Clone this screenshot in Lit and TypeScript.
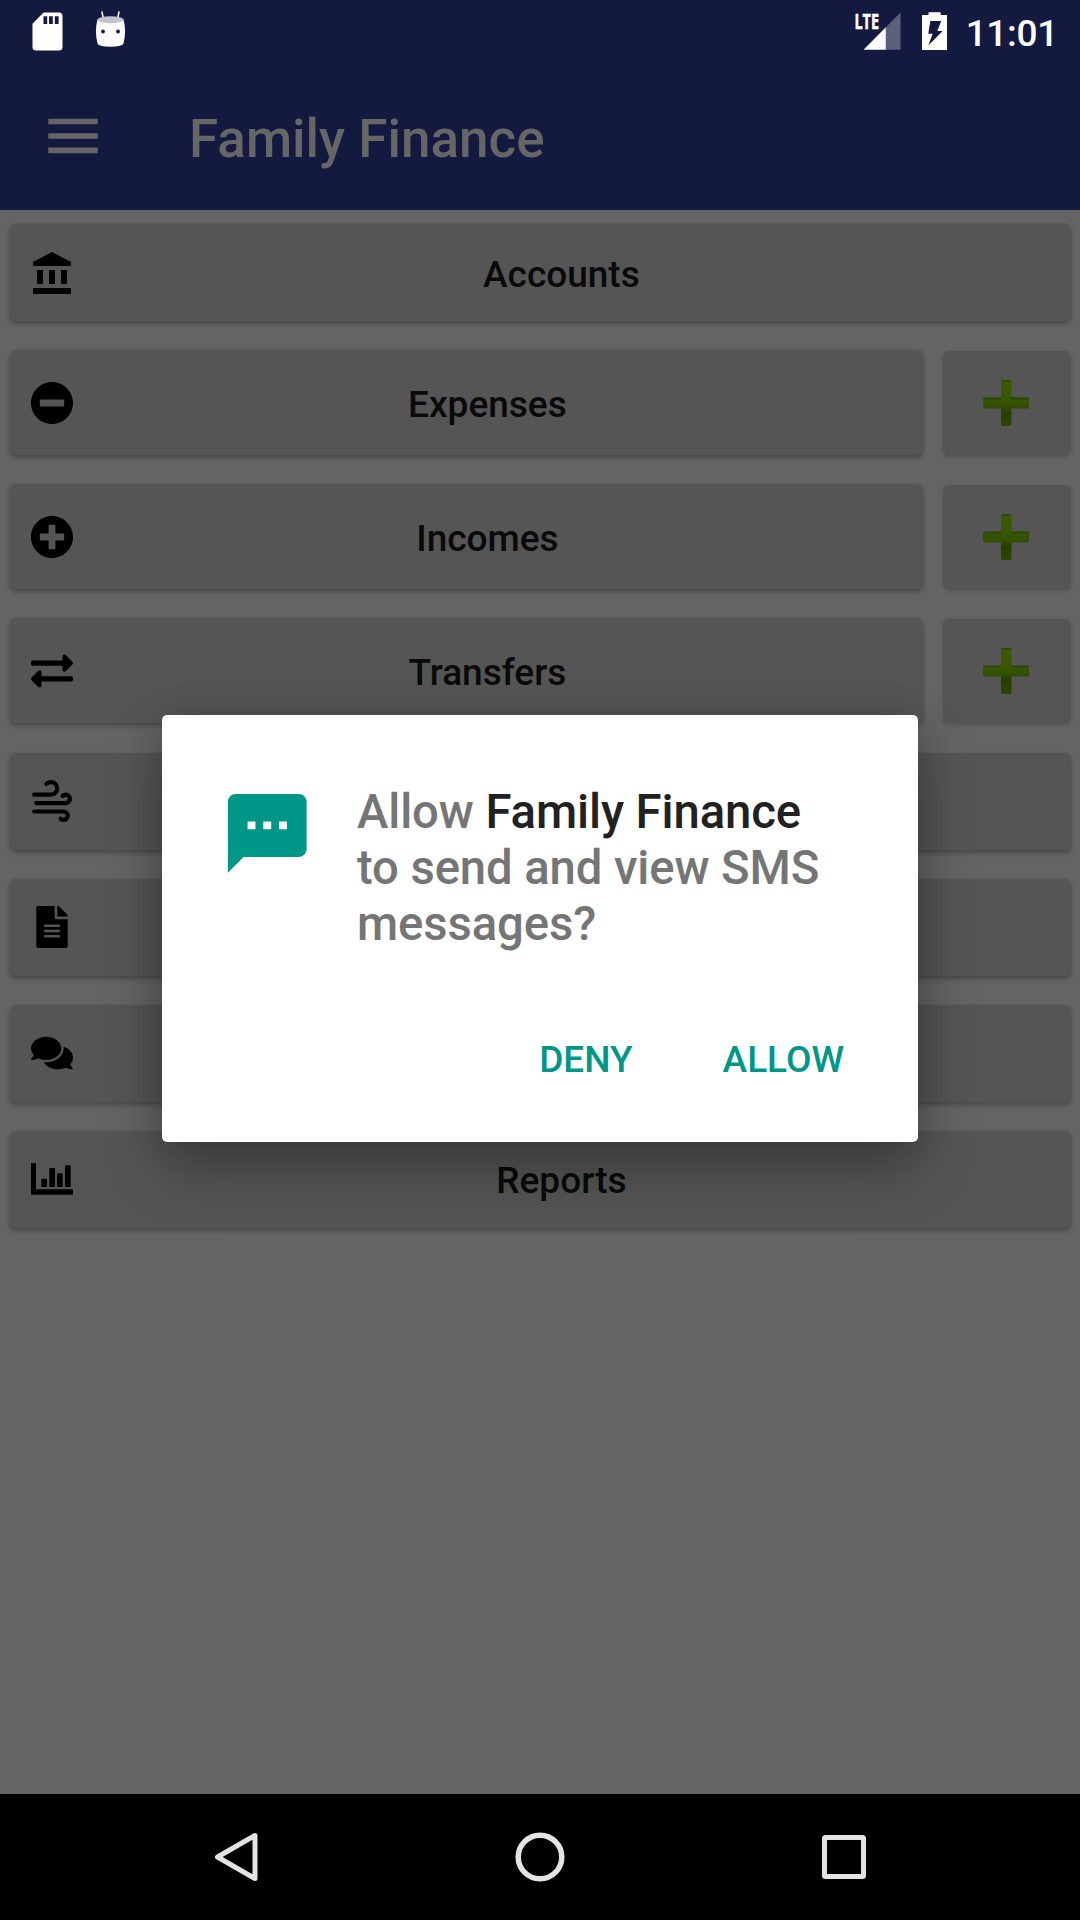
import { LitElement, html, svg, css, nothing } from "lit";
import { customElement, property } from "lit/decorators.js";

const icons: Record<string, unknown> = {
  accounts: svg`<svg class="bank" viewBox="2 1 19 21"><path d="M4 10v7h3v-7H4zm6 0v7h3v-7h-3zM2 22h19v-3H2v3zm14-12v7h3v-7h-3zm-4.5-9L2 6v2h19V6l-9.500-5z"/></svg>`,
  expenses: svg`<svg class="full" viewBox="8 8 496 496"><path d="M256 8C119 8 8 119 8 256s111 248 248 248 248-111 248-248S393 8 256 8zM124 296c-6.600 0-12-5.400-12-12v-56c0-6.600 5.400-12 12-12h264c6.600 0 12 5.400 12 12v56c0 6.600-5.400 12-12 12H124z"/></svg>`,
  incomes: svg`<svg class="full" viewBox="8 8 496 496"><path d="M256 8C119 8 8 119 8 256s111 248 248 248 248-111 248-248S393 8 256 8zm144 276c0 6.600-5.400 12-12 12h-92v92c0 6.600-5.400 12-12 12h-56c-6.600 0-12-5.400-12-12v-92h-92c-6.600 0-12-5.400-12-12v-56c0-6.600 5.400-12 12-12h92v-92c0-6.600 5.400-12 12-12h56c6.600 0 12 5.400 12 12v92h92c6.600 0 12 5.400 12 12v56z"/></svg>`,
  transfers: svg`<svg class="full" viewBox="0 0 512 512"><path d="M0 168v-16c0-13.255 10.745-24 24-24h360V80c0-21.367 25.899-32.042 40.971-16.971l80 80c9.372 9.373 9.372 24.569 0 33.941l-80 80C409.956 271.982 384 261.456 384 240v-48H24c-13.255 0-24-10.745-24-24zm488 152H128v-48c0-21.314-25.862-32.080-40.971-16.971l-80 80c-9.372 9.373-9.372 24.569 0 33.941l80 80C102.057 463.997 128 453.437 128 432v-48h360c13.255 0 24-10.745 24-24v-16c0-13.255-10.745-24-24-24z"/></svg>`,
  wind: svg`<svg class="full" viewBox="2.500 2 20 20"><path d="M4,10A1,1 0 0,1 3,9A1,1 0 0,1 4,8H12A2,2 0 0,0 14,6A2,2 0 0,0 12,4C11.450,4 10.950,4.220 10.590,4.590C10.200,5 9.560,5 9.170,4.590C8.780,4.200 8.780,3.560 9.170,3.170C9.900,2.450 10.900,2 12,2A4,4 0 0,1 16,6A4,4 0 0,1 12,10H4M19,12A1,1 0 0,0 20,11A1,1 0 0,0 19,10C18.720,10 18.470,10.110 18.290,10.290C17.900,10.680 17.270,10.680 16.880,10.290C16.500,9.900 16.500,9.270 16.880,8.880C17.420,8.340 18.170,8 19,8A3,3 0 0,1 22,11A3,3 0 0,1 19,14H5A1,1 0 0,1 4,13A1,1 0 0,1 5,12H19M18,18H4A1,1 0 0,1 3,17A1,1 0 0,1 4,16H18A3,3 0 0,1 21,19A3,3 0 0,1 18,22C17.170,22 16.420,21.660 15.880,21.120C15.500,20.730 15.500,20.100 15.880,19.710C16.270,19.320 16.900,19.320 17.290,19.710C17.470,19.890 17.720,20 18,20A1,1 0 0,0 19,19A1,1 0 0,0 18,18Z"/></svg>`,
  file: svg`<svg class="full" viewBox="-64 0 512 512"><path d="M224 136V0H24C10.700 0 0 10.700 0 24v464c0 13.300 10.700 24 24 24h336c13.300 0 24-10.700 24-24V160H248c-13.200 0-24-10.800-24-24zm64 236c0 6.600-5.400 12-12 12H108c-6.600 0-12-5.400-12-12v-8c0-6.600 5.400-12 12-12h168c6.600 0 12 5.400 12 12v8zm0-64c0 6.600-5.400 12-12 12H108c-6.600 0-12-5.400-12-12v-8c0-6.600 5.400-12 12-12h168c6.600 0 12 5.400 12 12v8zm0-72v8c0 6.600-5.400 12-12 12H108c-6.600 0-12-5.400-12-12v-8c0-6.600 5.400-12 12-12h168c6.600 0 12 5.400 12 12zm96-114.100v6.100H256V0h6.100c6.400 0 12.500 2.500 17 7l97.900 98c4.500 4.500 7 10.600 7 16.900z"/></svg>`,
  comments: svg`<svg class="full" viewBox="0 -32 576 576"><path d="M416 192c0-88.400-93.100-160-208-160S0 103.600 0 192c0 34.300 14.100 65.900 38 92-13.400 30.200-35.500 54.200-35.800 54.500-2.200 2.300-2.800 5.700-1.500 8.700S4.800 352 8 352c36.600 0 66.900-12.300 88.700-25 32.200 15.700 70.300 25 111.300 25 114.900 0 208-71.600 208-160zm122 220c23.900-26 38-57.700 38-92 0-66.900-53.500-124.200-129.300-148.100.9 6.600 1.300 13.300 1.300 20.100 0 105.900-107.700 192-240 192-10.800 0-21.300-.8-31.700-1.900C207.800 439.600 281.800 480 368 480c41 0 79.100-9.200 111.300-25 21.800 12.700 52.100 25 88.700 25 3.200 0 6.100-1.900 7.300-4.800 1.300-2.900.7-6.300-1.500-8.700-.3-.3-22.400-24.200-35.800-54.500z"/></svg>`,
  chart: svg`<svg class="full" viewBox="0 0 126 126"><path d="M2 15h11q2 0 2 2v77h109q2 0 2 2v12q0 2-2 2H2q-2 0-2-2V17q0-2 2-2z"/><rect x="31" y="62" width="17" height="25" rx="3"/><rect x="55" y="30" width="17" height="57" rx="3"/><rect x="78" y="46" width="17" height="41" rx="3"/><rect x="102" y="22" width="17" height="65" rx="3"/></svg>`,
};

@customElement("menu-row")
export class MenuRow extends LitElement {
  @property() label = "";
  @property() icon = "";
  @property({ type: Boolean }) add = false;

  static styles = css`
    :host { display: flex; gap: 20px; height: 97px; }
    :host([add]) { height: 105px; }
    .button {
      flex: 1;
      display: flex;
      align-items: center;
      padding: 0 21px;
      border-radius: 6px;
      background: #555555;
      box-shadow: 0 3px 5px rgba(0, 0, 0, 0.26), 0 0 3px rgba(0, 0, 0, 0.08);
    }
    .icon { display: flex; justify-content: center; width: 42px; height: 42px; }
    .full { width: 42px; height: 42px; }
    .bank { width: 38px; height: 42px; }
    .label {
      flex: 1;
      text-align: center;
      font: 500 37px/43px Roboto, sans-serif;
      padding-top: 3px;
      color: #0a0a0a;
      white-space: nowrap;
    }
    .add {
      display: flex;
      align-items: center;
      justify-content: center;
      width: 128px;
      margin-top: 1px;
      height: 105px;
      border-radius: 6px;
      background: #555555;
      box-shadow: 0 1px 4px rgba(0, 0, 0, 0.16);
    }
    .plus { width: 48px; height: 48px; margin: 0 2px 1px 0; }
  `;

  render() {
    return html`
      <div class="button">
        <span class="icon">${icons[this.icon]}</span>
        <span class="label">${this.label}</span>
      </div>
      ${this.add
        ? html`<div class="add">
            <svg class="plus" viewBox="0 0 48 48">
              <defs>
                <linearGradient id="v" x1="0" y1="0" x2="0" y2="1">
                  <stop offset="0" stop-color="#2a4300" />
                  <stop offset=".06" stop-color="#3a5c00" />
                  <stop offset=".5" stop-color="#365500" />
                  <stop offset=".72" stop-color="#263f00" />
                  <stop offset="1" stop-color="#2c4600" />
                </linearGradient>
                <linearGradient id="h" x1="0" y1="0" x2="0" y2="1">
                  <stop offset="0" stop-color="#263e00" />
                  <stop offset=".25" stop-color="#365600" />
                  <stop offset="1" stop-color="#304d00" />
                </linearGradient>
              </defs>
              <rect x="1" y="18.500" width="46" height="11" rx="1.500" fill="url(#h)" />
              <rect x="19" y="1" width="10.400" height="46" rx="1.500" fill="url(#v)" />
            </svg>
          </div>`
        : nothing}
    `;
  }
}

interface Row {
  label: string;
  icon: string;
  add?: boolean;
}

const groups: Row[][] = [
  [
    { label: "Accounts", icon: "accounts" },
    { label: "Expenses", icon: "expenses", add: true },
    { label: "Incomes", icon: "incomes", add: true },
    { label: "Transfers", icon: "transfers", add: true },
  ],
  [
    { label: "", icon: "wind" },
    { label: "", icon: "file" },
    { label: "", icon: "comments" },
    { label: "Reports", icon: "chart" },
  ],
];

@customElement("app-root")
export class AppRoot extends LitElement {
  static styles = css`
    :host {
      display: flex;
      flex-direction: column;
      position: relative;
      width: 1080px;
      height: 1920px;
      overflow: hidden;
      background: #646464;
      font-family: Roboto, sans-serif;
    }
    .status {
      box-sizing: border-box;
      display: flex;
      justify-content: space-between;
      height: 63px;
      padding: 0 22px 0 32px;
      background: #141940;
      color: #fff;
    }
    .group { display: flex; height: 63px; }
    .sd { width: 31px; height: 63px; margin-right: 32px; }
    .droid { width: 31px; height: 63px; }
    .signal { width: 46px; height: 63px; margin-right: 21px; }
    .lte { font: 700 22px "Open Sans", sans-serif; fill: #fff; stroke: #fff; stroke-width: 0.6px; }
    .battery { width: 25px; height: 63px; margin-right: 19px; }
    .clock { font-weight: 500; font-size: 37px; letter-spacing: -0.3px; line-height: 67px; white-space: nowrap; }
    .toolbar {
      display: flex;
      align-items: center;
      height: 147px;
      padding-left: 48px;
      background: #141940;
    }
    .burger { width: 50px; height: 36px; margin: 0 91px 2px 0; }
    .title {
      font-weight: 500;
      font-size: 53px;
      line-height: 62px;
      color: #666666;
      white-space: nowrap;
      padding-top: 5px;
    }
    .list {
      flex: 1;
      display: flex;
      flex-direction: column;
      gap: 29.500px;
      padding: 14px 9.500px 0 10.300px;
    }
    .rows { display: flex; flex-direction: column; gap: 29px; }
    .nav {
      display: flex;
      justify-content: space-between;
      align-items: center;
      box-sizing: border-box;
      height: 126px;
      padding: 0 211px;
      background: #000;
    }
    .key { width: 50px; height: 50px; }
    .dialog {
      position: absolute;
      left: 162px;
      top: 715px;
      width: 756px;
      height: 427px;
      box-sizing: border-box;
      display: flex;
      flex-direction: column;
      justify-content: space-between;
      padding: 68px 74px 57px 58px;
      border-radius: 5px;
      background: #fff;
      box-shadow: 0 28px 60px rgba(0, 0, 0, 0.3), 0 0 34px rgba(0, 0, 0, 0.12);
    }
    .message { display: flex; gap: 42.500px; }
    .sms { width: 94.500px; height: 94.500px; margin-top: 3px; fill: #009688; flex: none; }
    .question {
      font-weight: 500;
      font-size: 47.250px;
      letter-spacing: -0.1px;
      line-height: 56px;
      padding-top: 1px;
      color: #757575;
      white-space: nowrap;
    }
    .app { color: #212121; }
    .actions {
      display: flex;
      justify-content: flex-end;
      gap: 90px;
      font-weight: 500;
      font-size: 37px;
      line-height: 50px;
      color: #009688;
    }
  `;

  render() {
    return html`
      <div class="status">
        <div class="group">
          <svg class="sd" viewBox="0 0 31 63">
            <path fill="#fff" fill-rule="evenodd" d="M11.500 12.500H27Q30.500 12.500 30.500 16V47Q30.500 50.500 27 50.500H4Q.5 50.500 .5 47V23.800ZM11.500 16.200V24h3.700v-7.800ZM17 16.200V24h3.800v-7.800ZM22.800 16.200V24h3.800v-7.800Z" />
          </svg>
          <svg class="droid" viewBox="0 0 31 63">
            <path d="M7 12l1.400 7M24 12l-1.500 7" stroke="#fff" stroke-width="1.500" stroke-linecap="round" />
            <path fill="#fff" d="M2.500 19.500Q15.500 25 28.500 19.500Q31.700 31 28.500 43.500Q28 46.500 15.500 46.700Q3 46.500 2.500 43.500Q-.7 31 2.500 19.500Z" />
            <ellipse cx="15.500" cy="19.700" rx="13" ry="3.500" fill="#c1c3cf" />
            <circle cx="8" cy="31.500" r="1.900" fill="#141940" />
            <circle cx="23" cy="31.500" r="1.900" fill="#141940" />
          </svg>
        </div>
        <div class="group">
          <svg class="signal" viewBox="0 0 46 63">
            <path fill="#5c5f7b" d="M45.500 12.500V49.700H30.800V27.200Z" />
            <path fill="#fff" d="M30.800 27.200V49.700H8.500Z" />
            <text class="lte" x="-0.500" y="29" textLength="24.500" lengthAdjust="spacingAndGlyphs">LTE</text>
          </svg>
          <svg class="battery" viewBox="0 0 25 63">
            <path fill="#fff" fill-rule="evenodd" d="M6.500 12.300H18.700V15H25V50H0V15H6.500ZM8.300 21L6.300 33.700H10.700L6.300 45.500L20.700 31H15.300L19.200 21Z" />
          </svg>
          <span class="clock">11:01</span>
        </div>
      </div>
      <div class="toolbar">
        <svg class="burger" viewBox="0 0 50 36">
          <path fill="#666" d="M.3 .7h49.400v5.600H.3zM.3 15.200h49.400v5.600H.3zM.3 29.600h49.400v5.600H.3z" />
        </svg>
        <span class="title">Family Finance</span>
      </div>
      <div class="list">
        ${groups.map(
          (rows) => html`<div class="rows">
            ${rows.map((r) => html`<menu-row .label=${r.label} .icon=${r.icon} ?add=${r.add}></menu-row>`)}
          </div>`
        )}
      </div>
      <div class="nav">
        <svg class="key" viewBox="0 0 50 50">
          <path d="M44 3.500V46.500L6.500 25Z" fill="none" stroke="#e4e4e4" stroke-width="5" stroke-linejoin="round" />
        </svg>
        <svg class="key" viewBox="0 0 50 50">
          <circle cx="25" cy="25" r="21.800" fill="none" stroke="#e4e4e4" stroke-width="5.500" />
        </svg>
        <svg class="key" viewBox="0 0 50 50">
          <rect x="5.500" y="5.500" width="39" height="39" rx="1" fill="none" stroke="#e4e4e4" stroke-width="5" stroke-linejoin="round" />
        </svg>
      </div>
      <div class="dialog">
        <div class="message">
          <svg class="sms" viewBox="0 0 24 24">
            <path d="M20 2H4c-1.100 0-1.990.9-1.990 2L2 22l4-4h14c1.100 0 2-.9 2-2V4c0-1.100-.9-2-2-2zM9 11H7V9h2v2zm4 0h-2V9h2v2zm4 0h-2V9h2v2z" />
          </svg>
          <div class="question">Allow <span class="app">Family Finance</span><br />to send and view SMS<br />messages?</div>
        </div>
        <div class="actions"><span>DENY</span><span>ALLOW</span></div>
      </div>
    `;
  }
}
